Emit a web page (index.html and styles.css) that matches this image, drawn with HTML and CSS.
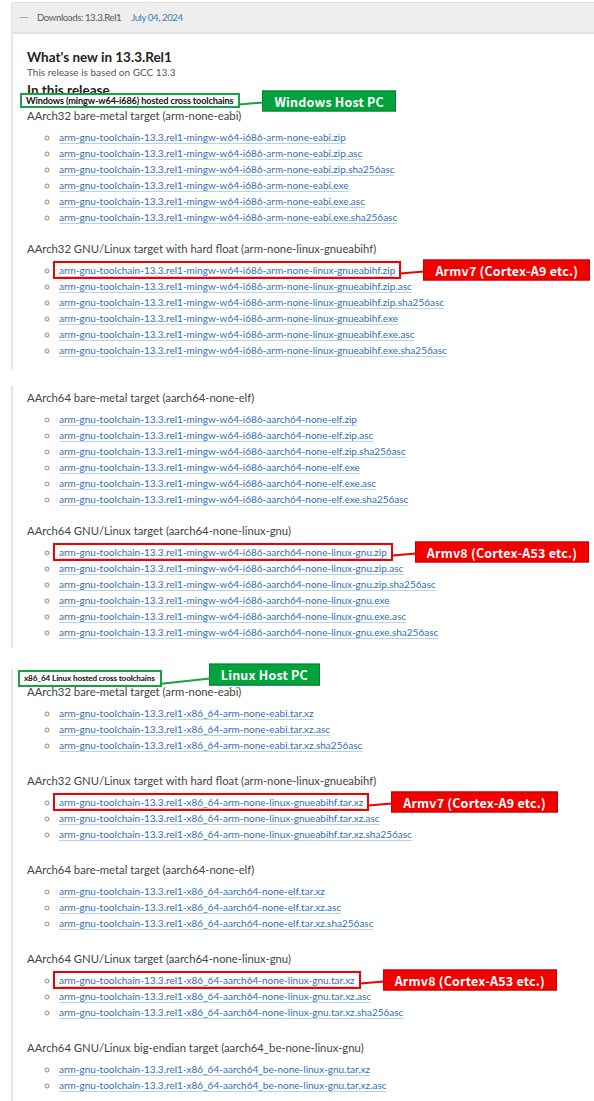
FILE: index.html
```html
<!DOCTYPE html>
<html>
<head>
    <title>Arm GNU Toolchain Downloads 13.3.Rel1</title>
    <meta charset="utf-8">
    <link rel="stylesheet" href="styles.css">
</head>
<body>
    <!-- Windows hosted, AArch32 -->
    <div class="chunk chunk-first">
        <div class="release-head">
            <span class="dash"></span>
            <span class="release-name">Downloads: 13.3.Rel1</span>
            <span class="release-date">July 04, 2024</span>
        </div>
        <div class="release-body">
            <h4 class="whats-new">What's new in 13.3.Rel1</h4>
            <p class="based-on">This release is based on GCC 13.3</p>
            <h3 class="in-release">In this release</h3>
            <div class="host host-win">
                Windows (mingw-w64-i686) hosted cross toolchains
                <span class="callout callout-green">Windows Host PC</span>
            </div>
            <div class="target">
                <p class="target-name">AArch32 bare-metal target (arm-none-eabi)</p>
                <ul class="files">
                    <li><a href="#">arm-gnu-toolchain-13.3.rel1-mingw-w64-i686-arm-none-eabi.zip</a></li>
                    <li><a href="#">arm-gnu-toolchain-13.3.rel1-mingw-w64-i686-arm-none-eabi.zip.asc</a></li>
                    <li><a href="#">arm-gnu-toolchain-13.3.rel1-mingw-w64-i686-arm-none-eabi.zip.sha256asc</a></li>
                    <li><a href="#">arm-gnu-toolchain-13.3.rel1-mingw-w64-i686-arm-none-eabi.exe</a></li>
                    <li><a href="#">arm-gnu-toolchain-13.3.rel1-mingw-w64-i686-arm-none-eabi.exe.asc</a></li>
                    <li><a href="#">arm-gnu-toolchain-13.3.rel1-mingw-w64-i686-arm-none-eabi.exe.sha256asc</a></li>
                </ul>
            </div>
            <div class="target">
                <p class="target-name">AArch32 GNU/Linux target with hard float (arm-none-linux-gnueabihf)</p>
                <ul class="files">
                    <li><span class="marked"><a href="#">arm-gnu-toolchain-13.3.rel1-mingw-w64-i686-arm-none-linux-gnueabihf.zip</a><span class="callout callout-red">Armv7 (Cortex-A9 etc.)</span></span></li>
                    <li><a href="#">arm-gnu-toolchain-13.3.rel1-mingw-w64-i686-arm-none-linux-gnueabihf.zip.asc</a></li>
                    <li><a href="#">arm-gnu-toolchain-13.3.rel1-mingw-w64-i686-arm-none-linux-gnueabihf.zip.sha256asc</a></li>
                    <li><a href="#">arm-gnu-toolchain-13.3.rel1-mingw-w64-i686-arm-none-linux-gnueabihf.exe</a></li>
                    <li><a href="#">arm-gnu-toolchain-13.3.rel1-mingw-w64-i686-arm-none-linux-gnueabihf.exe.asc</a></li>
                    <li><a href="#">arm-gnu-toolchain-13.3.rel1-mingw-w64-i686-arm-none-linux-gnueabihf.exe.sha256asc</a></li>
                </ul>
            </div>
        </div>
    </div>

    <!-- Windows hosted, AArch64 -->
    <div class="chunk chunk-mid">
        <div class="target">
            <p class="target-name">AArch64 bare-metal target (aarch64-none-elf)</p>
            <ul class="files">
                <li><a href="#">arm-gnu-toolchain-13.3.rel1-mingw-w64-i686-aarch64-none-elf.zip</a></li>
                <li><a href="#">arm-gnu-toolchain-13.3.rel1-mingw-w64-i686-aarch64-none-elf.zip.asc</a></li>
                <li><a href="#">arm-gnu-toolchain-13.3.rel1-mingw-w64-i686-aarch64-none-elf.zip.sha256asc</a></li>
                <li><a href="#">arm-gnu-toolchain-13.3.rel1-mingw-w64-i686-aarch64-none-elf.exe</a></li>
                <li><a href="#">arm-gnu-toolchain-13.3.rel1-mingw-w64-i686-aarch64-none-elf.exe.asc</a></li>
                <li><a href="#">arm-gnu-toolchain-13.3.rel1-mingw-w64-i686-aarch64-none-elf.exe.sha256asc</a></li>
            </ul>
        </div>
        <div class="target">
            <p class="target-name">AArch64 GNU/Linux target (aarch64-none-linux-gnu)</p>
            <ul class="files">
                <li><span class="marked"><a href="#">arm-gnu-toolchain-13.3.rel1-mingw-w64-i686-aarch64-none-linux-gnu.zip</a><span class="callout callout-red">Armv8 (Cortex-A53 etc.)</span></span></li>
                <li><a href="#">arm-gnu-toolchain-13.3.rel1-mingw-w64-i686-aarch64-none-linux-gnu.zip.asc</a></li>
                <li><a href="#">arm-gnu-toolchain-13.3.rel1-mingw-w64-i686-aarch64-none-linux-gnu.zip.sha256asc</a></li>
                <li><a href="#">arm-gnu-toolchain-13.3.rel1-mingw-w64-i686-aarch64-none-linux-gnu.exe</a></li>
                <li><a href="#">arm-gnu-toolchain-13.3.rel1-mingw-w64-i686-aarch64-none-linux-gnu.exe.asc</a></li>
                <li><a href="#">arm-gnu-toolchain-13.3.rel1-mingw-w64-i686-aarch64-none-linux-gnu.exe.sha256asc</a></li>
            </ul>
        </div>
    </div>

    <!-- Linux hosted -->
    <div class="chunk chunk-last">
        <div class="host host-linux">
            x86_64 Linux hosted cross toolchains
            <span class="callout callout-green callout-far">Linux Host PC</span>
        </div>
        <div class="target">
            <p class="target-name">AArch32 bare-metal target (arm-none-eabi)</p>
            <ul class="files">
                <li><a href="#">arm-gnu-toolchain-13.3.rel1-x86_64-arm-none-eabi.tar.xz</a></li>
                <li><a href="#">arm-gnu-toolchain-13.3.rel1-x86_64-arm-none-eabi.tar.xz.asc</a></li>
                <li><a href="#">arm-gnu-toolchain-13.3.rel1-x86_64-arm-none-eabi.tar.xz.sha256asc</a></li>
            </ul>
        </div>
        <div class="target">
            <p class="target-name">AArch32 GNU/Linux target with hard float (arm-none-linux-gnueabihf)</p>
            <ul class="files">
                <li><span class="marked"><a href="#">arm-gnu-toolchain-13.3.rel1-x86_64-arm-none-linux-gnueabihf.tar.xz</a><span class="callout callout-red">Armv7 (Cortex-A9 etc.)</span></span></li>
                <li><a href="#">arm-gnu-toolchain-13.3.rel1-x86_64-arm-none-linux-gnueabihf.tar.xz.asc</a></li>
                <li><a href="#">arm-gnu-toolchain-13.3.rel1-x86_64-arm-none-linux-gnueabihf.tar.xz.sha256asc</a></li>
            </ul>
        </div>
        <div class="target">
            <p class="target-name">AArch64 bare-metal target (aarch64-none-elf)</p>
            <ul class="files">
                <li><a href="#">arm-gnu-toolchain-13.3.rel1-x86_64-aarch64-none-elf.tar.xz</a></li>
                <li><a href="#">arm-gnu-toolchain-13.3.rel1-x86_64-aarch64-none-elf.tar.xz.asc</a></li>
                <li><a href="#">arm-gnu-toolchain-13.3.rel1-x86_64-aarch64-none-elf.tar.xz.sha256asc</a></li>
            </ul>
        </div>
        <div class="target">
            <p class="target-name">AArch64 GNU/Linux target (aarch64-none-linux-gnu)</p>
            <ul class="files">
                <li><span class="marked"><a href="#">arm-gnu-toolchain-13.3.rel1-x86_64-aarch64-none-linux-gnu.tar.xz</a><span class="callout callout-red">Armv8 (Cortex-A53 etc.)</span></span></li>
                <li><a href="#">arm-gnu-toolchain-13.3.rel1-x86_64-aarch64-none-linux-gnu.tar.xz.asc</a></li>
                <li><a href="#">arm-gnu-toolchain-13.3.rel1-x86_64-aarch64-none-linux-gnu.tar.xz.sha256asc</a></li>
            </ul>
        </div>
        <div class="target">
            <p class="target-name">AArch64 GNU/Linux big-endian target (aarch64_be-none-linux-gnu)</p>
            <ul class="files">
                <li><a href="#">arm-gnu-toolchain-13.3.rel1-x86_64-aarch64_be-none-linux-gnu.tar.xz</a></li>
                <li><a href="#">arm-gnu-toolchain-13.3.rel1-x86_64-aarch64_be-none-linux-gnu.tar.xz.asc</a></li>
            </ul>
        </div>
    </div>
</body>
</html>
```

FILE: styles.css
```css
html {
    font-family: Lato, "Liberation Sans", sans-serif;
}
body {
    margin: 0;
    background: #fff;
    color: #444;
    overflow: hidden;
}

/* each pasted block of the page */
.chunk {
    margin-left: 11px;
    border-left: 2px solid #e6e6e6;
    padding: 4px 0 10px 14px;
}
.chunk-first {
    margin-top: 2px;
    padding: 0 0 11px 0;
}
.chunk-mid {
    margin-top: 16px;
    padding-bottom: 8px;
}
.chunk-last {
    margin-top: 21px;
    padding-top: 1px;
    padding-bottom: 20px;
}

.release-head {
    display: flex;
    align-items: center;
    height: 29px;
    background: #eeeeee;
    border-top: 1px solid #e2e2e2;
    border-bottom: 2px solid #e3e3e3;
    padding-left: 7px;
    font-size: 9.6px;
    color: #5a5a5a;
    letter-spacing: -0.4px;
}
.dash {
    width: 8px;
    height: 1px;
    background: #a8a8a8;
    margin-right: 9px;
}
.release-date {
    color: #3b7dc0;
    margin-left: 10px;
}
.release-body {
    padding-left: 14px;
}

.whats-new {
    margin: 15px 0 0;
    font-size: 13.5px;
    line-height: 16px;
    color: #222;
}
.based-on {
    margin: 0;
    font-size: 10px;
    line-height: 14px;
    color: #555;
}
.in-release {
    margin: 3px 0 0;
    font-size: 13.5px;
    line-height: 17px;
    color: #222;
}

/* green boxes round the host name */
.host {
    position: relative;
    width: fit-content;
    background: #fff;
    border: 2px solid #17a248;
    padding: 0 5px 0 4px;
    font-size: 9.2px;
    line-height: 11px;
    font-weight: bold;
    color: #111;
    letter-spacing: -0.15px;
}
.host-win {
    margin: -6px 0 -1px -7px;
}
.host-linux {
    margin: 0 0 -4px -9px;
    font-size: 8.2px;
    line-height: 13px;
}

.target + .target {
    margin-top: 15px;
}
.chunk-last .target + .target {
    margin-top: 19px;
}
.target-name {
    margin: 0;
    font-size: 11.3px;
    line-height: 18px;
    color: #444;
}
.files {
    margin: 4px 0 0;
    padding-left: 32px;
    list-style: circle;
    font-size: 10px;
    line-height: 16px;
}
.files li::marker {
    color: #888;
    font-size: 11px;
}
.files a {
    color: #2f6fb8;
    text-decoration: underline;
    text-decoration-color: #b9d1ea;
    text-underline-offset: 2px;
}

/* red boxes round a chosen file */
.marked {
    position: relative;
    border: 2px solid #f20000;
    padding: 1px 4px 1px;
    margin: 0 -6px;
}

.callout {
    position: absolute;
    top: 50%;
    left: calc(100% + 24px);
    transform: translateY(-50%);
    height: 19px;
    line-height: 19px;
    padding: 0 11px;
    white-space: nowrap;
    font-family: "Noto Sans CJK JP", "Noto Sans", sans-serif;
    font-size: 12.5px;
    font-weight: bold;
    letter-spacing: 0.2px;
    color: #fff;
}
.callout::before {
    content: "";
    position: absolute;
    right: 100%;
    top: 10px;
    width: 24px;
    height: 2px;
    transform: rotate(-5deg);
    transform-origin: right center;
}
.callout-green {
    background: #00a33c;
    border: 1px solid #0b7f35;
}
.callout-green::before {
    background: #17a248;
}
.callout-red {
    background: #f20000;
    border: 1px solid #c40000;
}
.callout-red::before {
    background: #f20000;
}
.callout-far {
    left: calc(100% + 49px);
    height: 20px;
    transform: translateY(-70%);
}
.callout-far::before {
    width: 49px;
    top: 13px;
    transform: rotate(-6deg);
}
```
